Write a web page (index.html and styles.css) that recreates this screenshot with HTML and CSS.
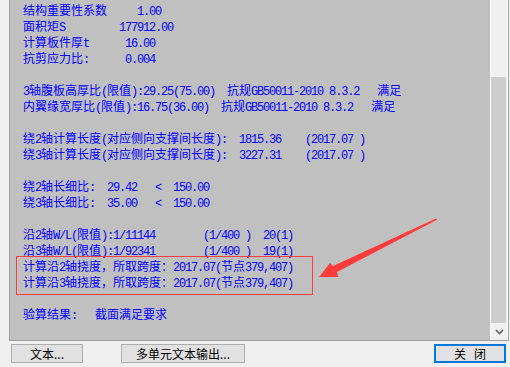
FILE: index.html
```html
<!DOCTYPE html>
<html lang="zh-CN">
<head>
    <meta charset="UTF-8">
    <title>构件验算结果</title>
    <link rel="stylesheet" href="styles.css">
</head>
<body>

<div class="panel">
    <div class="report">
<div class="ln"><span class="c">结构重要性系数</span>     1.00</div>
<div class="ln"><span class="c">面积矩</span>S         177912.00</div>
<div class="ln"><span class="c">计算板件厚</span>t      16.00</div>
<div class="ln"><span class="c">抗剪应力比</span>:      0.004</div>
<div class="ln"></div>
<div class="ln">3<span class="c">轴腹板高厚比</span>(<span class="c">限值</span>):29.25(75.00)  <span class="c">抗规</span>GB50011-2010 8.3.2   <span class="c">满足</span></div>
<div class="ln"><span class="c">内翼缘宽厚比</span>(<span class="c">限值</span>):16.75(36.00)  <span class="c">抗规</span>GB50011-2010 8.3.2   <span class="c">满足</span></div>
<div class="ln"></div>
<div class="ln"><span class="c">绕</span>2<span class="c">轴计算长度</span>(<span class="c">对应侧向支撑间长度</span>):  1815.36    (2017.07 )</div>
<div class="ln"><span class="c">绕</span>3<span class="c">轴计算长度</span>(<span class="c">对应侧向支撑间长度</span>):  3227.31    (2017.07 )</div>
<div class="ln"></div>
<div class="ln"><span class="c">绕</span>2<span class="c">轴长细比</span>:  29.42   &lt;  150.00</div>
<div class="ln"><span class="c">绕</span>3<span class="c">轴长细比</span>:  35.00   &lt;  150.00</div>
<div class="ln"></div>
<div class="ln"><span class="c">沿</span>2<span class="c">轴</span>W/L(<span class="c">限值</span>):1/11144        (1/400 )  20(1)</div>
<div class="ln"><span class="c">沿</span>3<span class="c">轴</span>W/L(<span class="c">限值</span>):1/92341        (1/400 )  19(1)</div>
<div class="ln"><span class="c">计算沿</span>2<span class="c">轴挠度，所取跨度：</span>2017.07(<span class="c">节点</span>379,407)</div>
<div class="ln"><span class="c">计算沿</span>3<span class="c">轴挠度，所取跨度：</span>2017.07(<span class="c">节点</span>379,407)</div>
<div class="ln"></div>
<div class="ln"><span class="c">验算结果</span>:   <span class="c">截面满足要求</span></div>
    </div>

    <!-- vertical scrollbar -->
    <div class="scrollbar">
        <div class="track-top"></div>
        <div class="thumb"></div>
        <div class="arrow-down">
            <svg width="9" height="6" viewBox="0 0 9 6"><path d="M1 1 L4.5 4.5 L8 1" fill="none" stroke="#606060" stroke-width="1.6"/></svg>
        </div>
    </div>

    <!-- red annotation drawn over the report -->
    <svg class="markup" width="510" height="341" viewBox="0 0 510 341">
        <rect x="16.5" y="256.5" width="296" height="38" fill="none" stroke="#ff3b3b" stroke-width="1"/>
        <polygon points="319,277 330,263 333,266 436,218.5 437.5,219.5 337,272 338,277" fill="#ff3b3b"/>
    </svg>
</div>

<div class="buttons">
    <button class="btn btn-text">文本...</button>
    <button class="btn btn-multi">多单元文本输出...</button>
    <button class="btn btn-close">关&nbsp;&nbsp;&nbsp;闭</button>
</div>

</body>
</html>
```

FILE: styles.css
```css
body {
    margin: 0;
    width: 510px;
    height: 367px;
    overflow: hidden;
    background-color: #f0f0f0;
}

.panel {
    position: relative;
    display: flex;
    box-sizing: border-box;
    width: 500px;
    height: 342px;
    margin: -1px 0 0 9px;
    border: 1px solid #a0a0a0;
}

.report {
    flex: 1;
    background-color: #c0c0c0;
    padding: 2px 0 0 13px;
    color: #0000ff;
    font-family: "Liberation Mono", monospace;
    font-size: 12px;
    letter-spacing: -1.2px;
}

.ln {
    height: 16px;
    line-height: 16px;
    white-space: pre;
}

.c {
    font-family: "Noto Sans CJK SC", sans-serif;
    font-size: 12px;
    letter-spacing: 0;
}

.scrollbar {
    display: flex;
    flex-direction: column;
    width: 16px;
    background-color: #f0f0f0;
    border-left: 1px solid #fff;
    border-right: 1px solid #fff;
}

.track-top {
    height: 77px;
}

.thumb {
    height: 246px;
    margin-right: 1px;
    background-color: #cdcdcd;
}

.arrow-down {
    flex: 1;
    display: flex;
    align-items: center;
    justify-content: center;
}

.markup {
    position: absolute;
    left: -10px;
    top: 0;
    pointer-events: none;
}

.buttons {
    display: flex;
    padding-top: 3px;
}

.btn {
    box-sizing: border-box;
    height: 19px;
    padding: 0;
    border: 1px solid #adadad;
    background-color: #e1e1e1;
    color: #000;
    font-family: "Noto Sans CJK SC", sans-serif;
    font-size: 12px;
    line-height: 16px;
}

.btn-text {
    width: 72px;
    margin-left: 11px;
}

.btn-multi {
    width: 124px;
    margin-left: 38px;
}

.btn-close {
    width: 72px;
    margin-left: auto;
    margin-right: 4px;
    border: 2px solid #0078d7;
}
```
